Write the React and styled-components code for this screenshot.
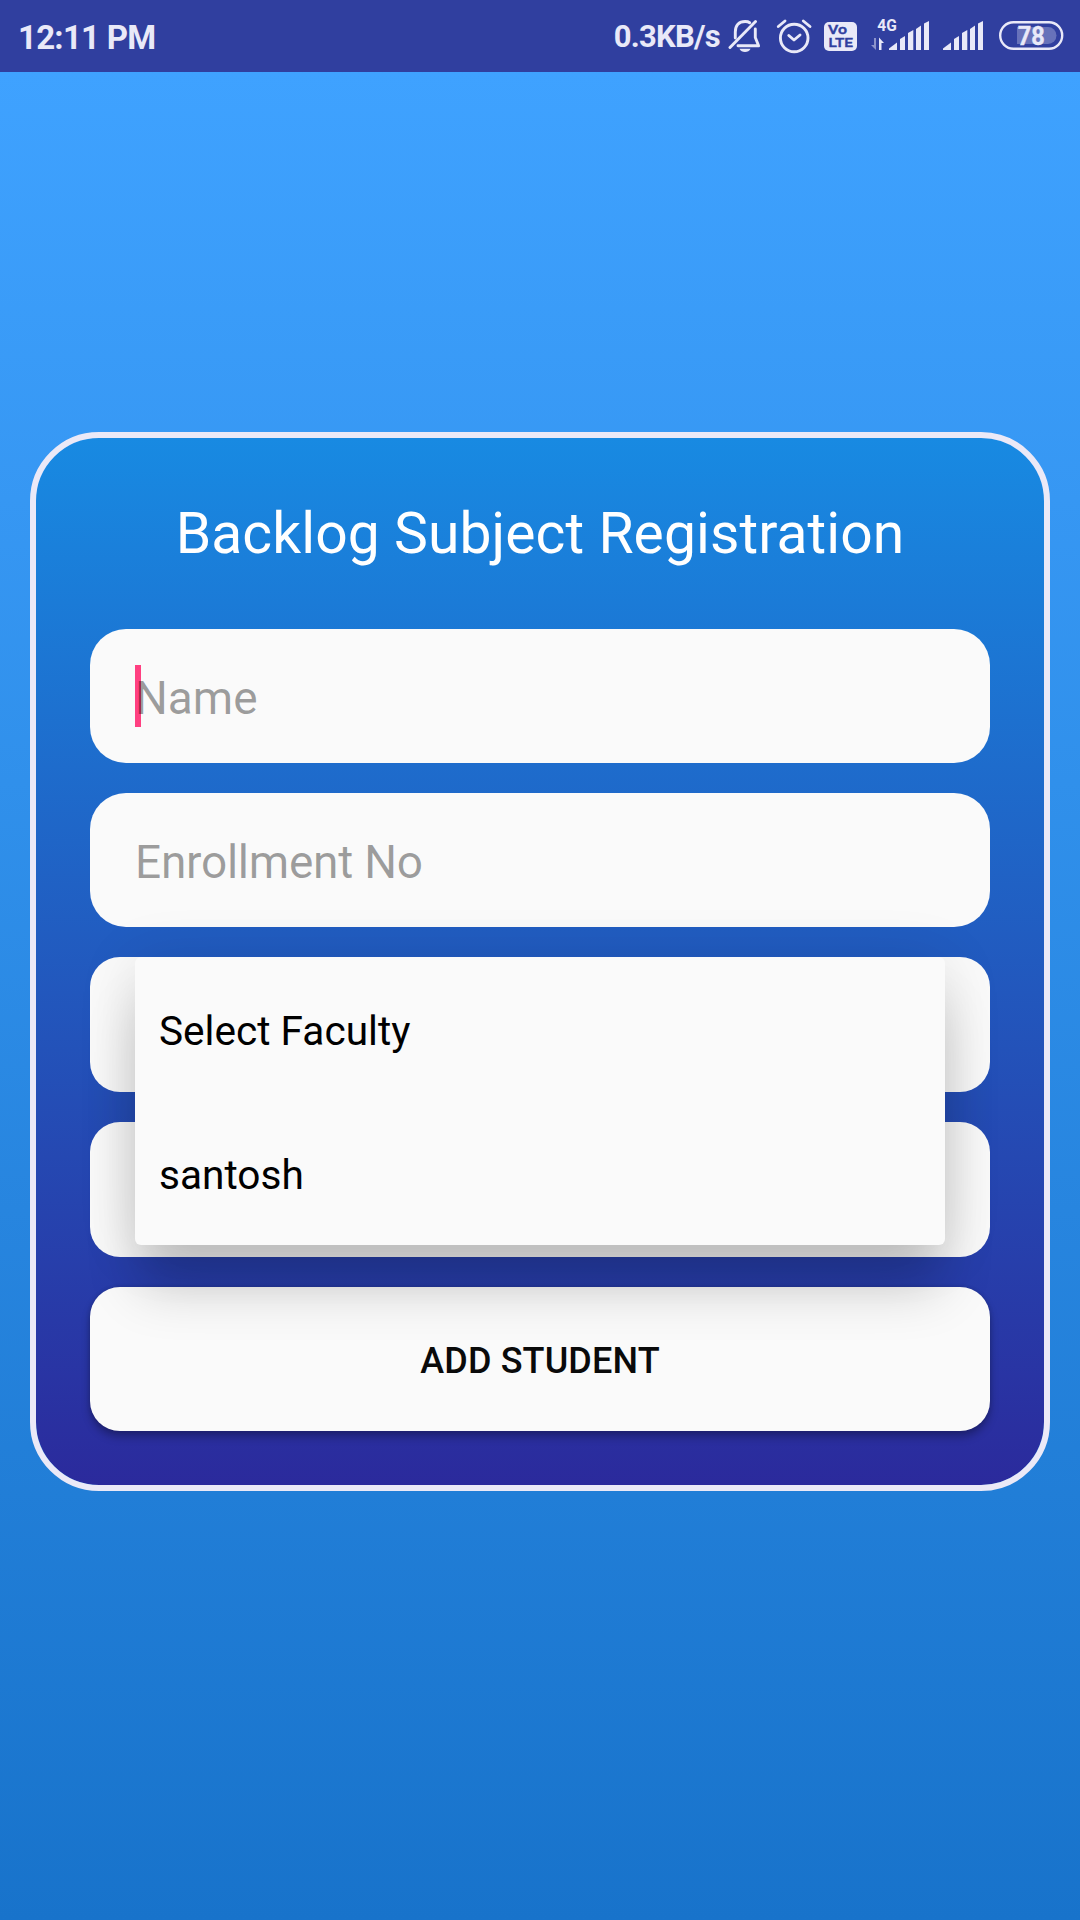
import React from "react";
import styled, { createGlobalStyle } from "styled-components";

const GlobalStyle = createGlobalStyle`
  * { box-sizing: border-box; }
  body { margin: 0; font-family: Roboto, "Liberation Sans", sans-serif; }
`;

const INK = "#e9e9f8";

const Screen = styled.div`
  display: flex;
  flex-direction: column;
  width: 1080px;
  height: 1920px;
  overflow: hidden;
`;

const StatusBar = styled.header`
  display: flex;
  align-items: flex-start;
  justify-content: space-between;
  height: 72px;
  padding: 17px 16px 0 18px;
  background: #303f9f;
  color: ${INK};
`;

const StatusText = styled.span`
  height: 38px;
  line-height: ${(p) => p.$line}px;
  font-size: ${(p) => p.$size}px;
  font-weight: ${(p) => p.$weight};
  letter-spacing: ${(p) => p.$track || 0}px;
  white-space: nowrap;
`;

const StatusIcons = styled.div`
  display: flex;
  align-items: flex-start;
`;

const Icon = styled.svg`
  display: block;
  flex: none;
  margin-left: ${(p) => p.$gap}px;
  font-family: Roboto, "Liberation Sans", sans-serif;
`;

const Content = styled.main`
  flex: 1;
  padding: 360px 30px 0;
  background: linear-gradient(180deg, #3fa2ff 0%, #1873cb 100%);
`;

const Card = styled.section`
  display: flex;
  flex-direction: column;
  height: 1059px;
  padding: 57px 54px 0;
  border: 6px solid #ebe9f7;
  border-radius: 69px;
  background: linear-gradient(180deg, #188ae2 0%, #2b2a9c 100%) padding-box;
`;

const Title = styled.h1`
  margin: 0 0 57px;
  height: 77px;
  line-height: 77px;
  font-size: 57px;
  font-weight: 400;
  letter-spacing: 0.08px;
  text-align: center;
  white-space: nowrap;
  color: #fff;
`;

const Fields = styled.div`
  display: flex;
  flex-direction: column;
  gap: 30px;
`;

const Field = styled.div`
  position: relative;
  height: 134px;
  padding: 3px 45px 0;
  border-radius: 36px;
  background: #fafafa;
  font-size: 46px;
  line-height: 132px;
  letter-spacing: ${(p) => p.$track || 0}px;
  white-space: nowrap;
`;

const Hint = styled.span`
  position: relative;
  color: rgba(0, 0, 0, 0.38);
`;

const Caret = styled.i`
  position: absolute;
  left: 45px;
  top: 36px;
  width: 6px;
  height: 62px;
  background: #ff4081;
`;

const Spinner = styled.div`
  position: relative;
  height: 135px;
  border-radius: 30px;
  background: #fafafa;
  z-index: ${(p) => (p.$open ? 2 : 0)};
`;

const Popup = styled.ul`
  position: absolute;
  top: 0;
  left: 45px;
  right: 45px;
  margin: 0;
  padding: 0;
  list-style: none;
  border-radius: 6px;
  background: #fafafa;
  box-shadow: 0 48px 54px -5px rgba(0, 0, 0, 0.19), 0 6px 60px rgba(0, 0, 0, 0.12);
`;

const Option = styled.li`
  height: 144px;
  padding: 2px 24px 0;
  line-height: 144px;
  font-size: 40.6px;
  color: #000;
`;

const AddButton = styled.button`
  height: 144px;
  padding: 5px 0 0;
  border: 0;
  border-radius: 30px;
  background: #fafafa;
  box-shadow: 0 6px 9px rgba(0, 0, 0, 0.28), 0 0 4px rgba(0, 0, 0, 0.14);
  font: 500 36px/139px Roboto, "Liberation Sans", sans-serif;
  letter-spacing: 0.15px;
  text-align: center;
  color: #0a0a0a;
`;

function MutedBell() {
  return (
    <Icon $gap={8} width="33" height="36" viewBox="0 0 33 36" fill="none" stroke={INK} strokeWidth="2.9" strokeLinecap="round" strokeLinejoin="round">
      <path d="M2 30.5 L27.5 4.5" />
      <path d="M7.3 21 V15 C7.3 8.5 10.8 4.5 17.2 4.5 C19.2 4.5 20.7 5 21.7 5.7" />
      <path d="M27.3 12 V20.5 L30.6 28.8 H10" />
      <path d="M11.5 31.8 H22.5 C21.5 34 19.5 35 17 35 S12.5 34 11.5 31.8Z" fill={INK} stroke="none" />
    </Icon>
  );
}

function Alarm() {
  return (
    <Icon $gap={14} width="38" height="38" viewBox="0 0 38 38" fill="none" stroke={INK} strokeWidth="2.9" strokeLinecap="round" strokeLinejoin="round">
      <circle cx="19.2" cy="21" r="13.8" />
      <path d="M3.3 9.5 L10 4" />
      <path d="M28.3 4 L35 9.5" />
      <path d="M13.8 18.5 L19 23 L25 18" />
    </Icon>
  );
}

function VoLte() {
  return (
    <Icon $gap={11} width="33" height="36" viewBox="0 0 33 36">
      <rect x="0" y="5" width="33" height="29" rx="5" fill={INK} />
      <g fill="#303f9f" stroke="#303f9f" strokeWidth="0.4" fontWeight="500">
        <text x="4" y="17" fontSize="12" textLength="19" lengthAdjust="spacingAndGlyphs">Vo</text>
        <text x="4.5" y="30.3" fontSize="13.2" textLength="24.5" lengthAdjust="spacingAndGlyphs">LTE</text>
      </g>
    </Icon>
  );
}

function Bars() {
  return (
    <g fill={INK}>
      <path d="M0 33 V31.5 L8 25.5 V33Z" />
      <path d="M11 33 V22 L16 19 V33Z" />
      <path d="M19 33 V16 L24.3 13 V33Z" />
      <path d="M27 33 V12 L32 8.5 V33Z" />
      <path d="M35 33 V6.5 L40 4 V33Z" />
    </g>
  );
}

function DataSignal() {
  return (
    <Icon $gap={14} width="58" height="36" viewBox="0 0 58 36">
      <text x="6.3" y="14.3" fontSize="16" fontWeight="700" fill={INK} textLength="19.5" lengthAdjust="spacingAndGlyphs">4G</text>
      <path d="M5 21 V33 L0 28 H3 V21Z" fill={INK} opacity="0.5" />
      <path d="M8 33 V20.5 L13 26 H10.5 V33Z" fill={INK} />
      <g transform="translate(18 0)"><Bars /></g>
    </Icon>
  );
}

function Signal() {
  return (
    <Icon $gap={14} width="40" height="36" viewBox="0 0 40 36">
      <Bars />
    </Icon>
  );
}

function Battery() {
  return (
    <Icon $gap={16} width="65" height="36" viewBox="0 0 65 36">
      <rect x="1.2" y="5.3" width="62" height="26.4" rx="13.2" fill="none" stroke={INK} strokeWidth="2.4" />
      <path d="M18 10 H49 A8.5 8.5 0 0 1 49 27 H18Z" fill={INK} opacity="0.3" />
      <text x="18.8" y="28" fontSize="26" fontWeight="700" fill={INK} stroke={INK} strokeWidth="0.4" textLength="27" lengthAdjust="spacingAndGlyphs">78</text>
    </Icon>
  );
}

export default function App() {
  return (
    <Screen>
      <GlobalStyle />
      <StatusBar>
        <StatusText $size={33} $line={42} $weight={700} $track={-0.75}>12:11 PM</StatusText>
        <StatusIcons>
          <StatusText $size={31} $line={40} $weight={700} $track={-0.75}>0.3KB/s</StatusText>
          <MutedBell />
          <Alarm />
          <VoLte />
          <DataSignal />
          <Signal />
          <Battery />
        </StatusIcons>
      </StatusBar>
      <Content>
        <Card>
          <Title>Backlog Subject Registration</Title>
          <Fields>
            <Field>
              <Caret />
              <Hint>Name</Hint>
            </Field>
            <Field $track={-0.25}>
              <Hint>Enrollment No</Hint>
            </Field>
            <Spinner $open>
              <Popup>
                <Option>Select Faculty</Option>
                <Option>santosh</Option>
              </Popup>
            </Spinner>
            <Spinner />
            <AddButton type="button">ADD STUDENT</AddButton>
          </Fields>
        </Card>
      </Content>
    </Screen>
  );
}
